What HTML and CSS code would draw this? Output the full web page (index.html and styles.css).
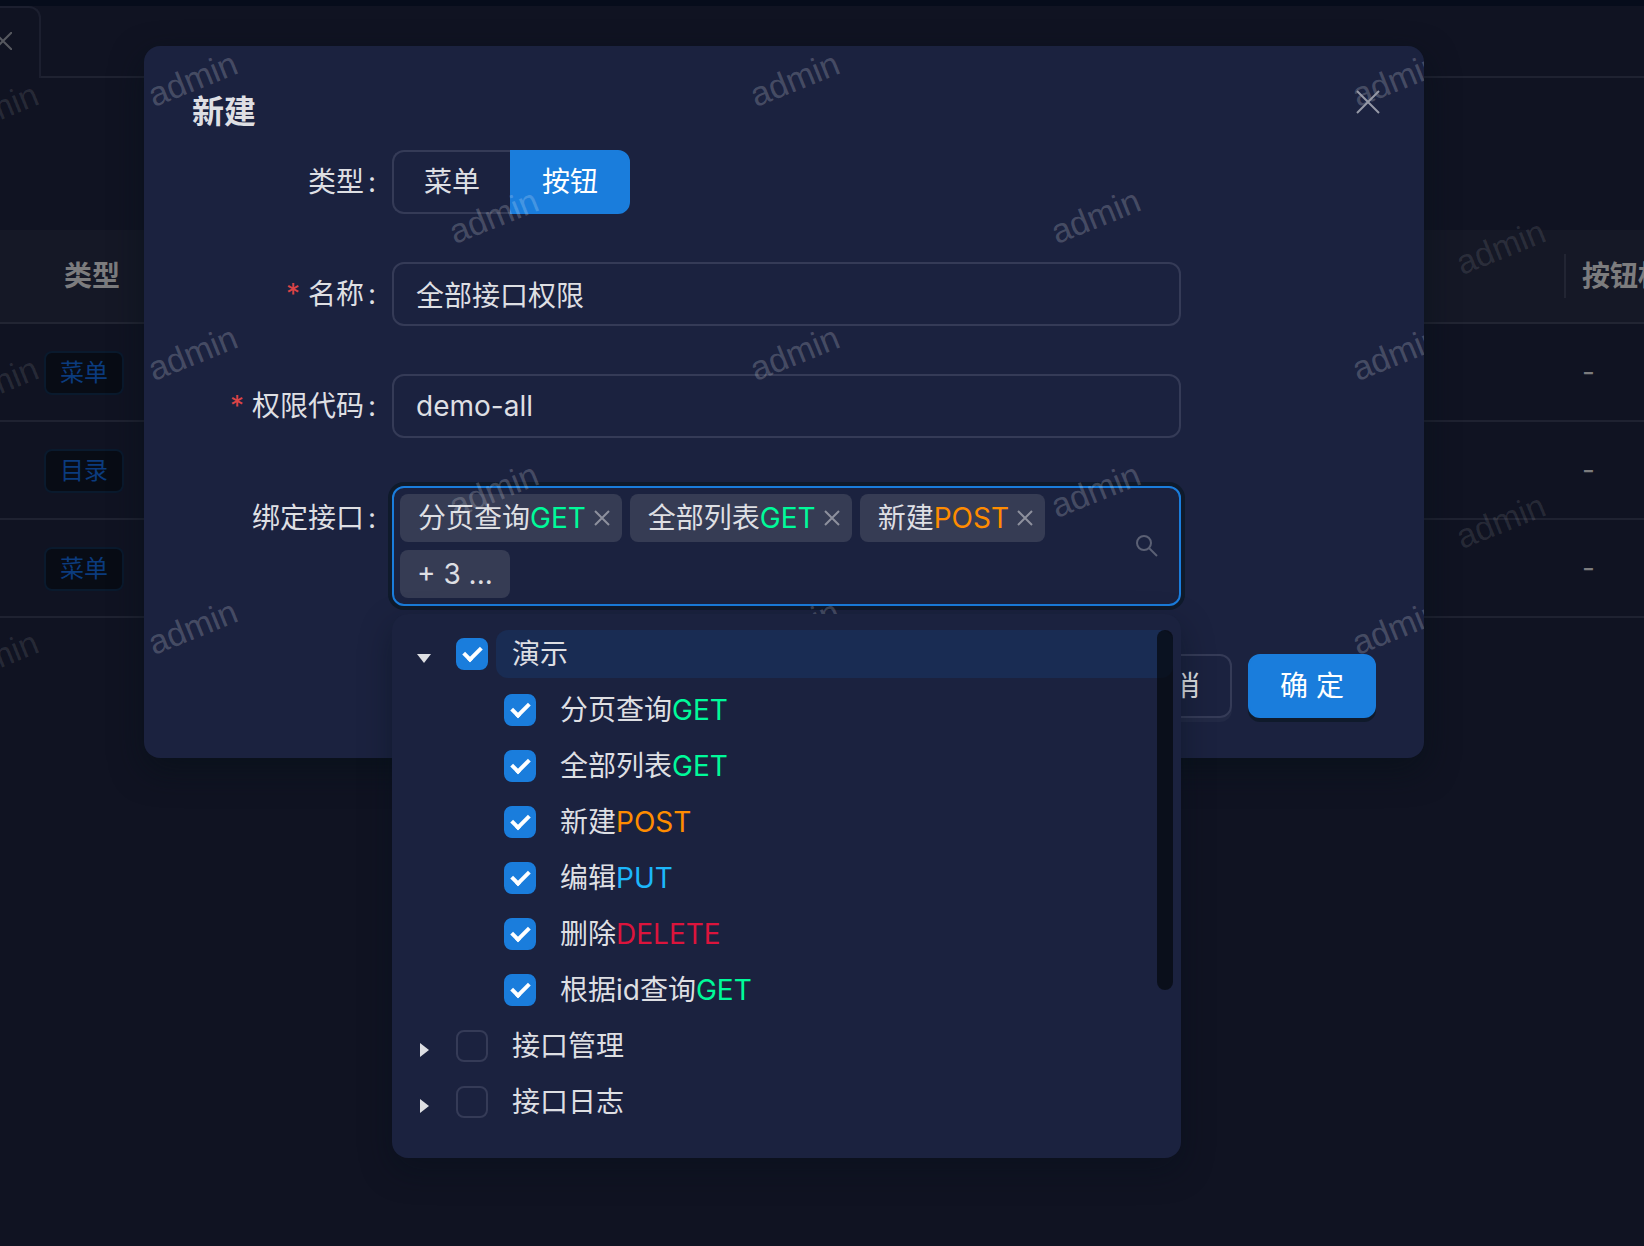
FILE: index.html
```html
<!DOCTYPE html>
<html lang="zh-Hans">
<head>
<meta charset="utf-8"/>
<meta content="width=device-width, initial-scale=1" name="viewport"/>
<title>菜单管理</title>
<link rel="stylesheet" href="styles.css">
</head>
<body>
<div class="page">
  <div class="tabs">
    <div class="tab">
      <button class="tab-close" type="button" aria-label="关闭标签">
        <svg viewBox="0 0 18 18"><path d="M0 0L18 18M18 0L0 18"/></svg>
      </button>
    </div>
    <div class="tabs-rest"></div>
  </div>
  <table class="menu-table">
    <thead>
      <tr><th class="col-type">类型</th><th></th><th class="col-perm">按钮权限</th></tr>
    </thead>
    <tbody>
      <tr><td class="col-type"><span class="type-tag">菜单</span></td><td></td><td class="col-perm">-</td></tr>
      <tr><td class="col-type"><span class="type-tag">目录</span></td><td></td><td class="col-perm">-</td></tr>
      <tr><td class="col-type"><span class="type-tag">菜单</span></td><td></td><td class="col-perm">-</td></tr>
    </tbody>
  </table>
  <svg class="watermark watermark-page" aria-hidden="true">
    <g text-anchor="middle">
      <text transform="translate(-2 115) rotate(-22)">admin</text>
      <text transform="translate(-2 389) rotate(-22)">admin</text>
      <text transform="translate(-2 663) rotate(-22)">admin</text>
      <text transform="translate(1505 252) rotate(-22)">admin</text>
      <text transform="translate(1505 526) rotate(-22)">admin</text>
    </g>
  </svg>
</div>

<div class="modal-wrap">
  <div class="modal" role="dialog" aria-labelledby="modalTitle">
    <button class="modal-close" type="button" aria-label="关闭">
      <svg viewBox="0 0 24 24"><path d="M1 1L23 23M23 1L1 23"/></svg>
    </button>
    <h2 class="modal-title" id="modalTitle">新建</h2>

    <form class="form" onsubmit="return false">
      <div class="form-item">
        <span class="form-label" id="typeLabel">类型<i class="colon">:</i></span>
        <div class="radio-group" role="radiogroup" aria-labelledby="typeLabel">
          <label class="radio-btn"><input name="type" type="radio" value="menu"/>菜单</label>
          <label class="radio-btn"><input name="type" type="radio" value="button" checked/>按钮</label>
        </div>
      </div>
      <div class="form-item">
        <label class="form-label" for="name"><b class="required">*</b>名称<i class="colon">:</i></label>
        <input class="text-input" id="name" type="text" value="全部接口权限"/>
      </div>
      <div class="form-item">
        <label class="form-label" for="code"><b class="required">*</b>权限代码<i class="colon">:</i></label>
        <input class="text-input" id="code" type="text" value="demo-all"/>
      </div>
      <div class="form-item">
        <label class="form-label" for="apiSearch">绑定接口<i class="colon">:</i></label>
        <div class="select-wrap">
          <div class="select">
            <div class="select-tags">
              <span class="tag">分页查询<em class="get">GET</em>
                <button class="tag-remove" type="button" aria-label="移除"><svg viewBox="0 0 16 16"><path d="M1 1L15 15M15 1L1 15"/></svg></button>
              </span>
              <span class="tag">全部列表<em class="get">GET</em>
                <button class="tag-remove" type="button" aria-label="移除"><svg viewBox="0 0 16 16"><path d="M1 1L15 15M15 1L1 15"/></svg></button>
              </span>
              <span class="tag">新建<em class="post">POST</em>
                <button class="tag-remove" type="button" aria-label="移除"><svg viewBox="0 0 16 16"><path d="M1 1L15 15M15 1L1 15"/></svg></button>
              </span>
              <span class="tag tag-more">+ 3 ...</span>
              <input class="select-search" id="apiSearch" type="text"/>
            </div>
            <svg class="search-icon" viewBox="0 0 22 22"><circle cx="8" cy="8" r="7"/><path d="M13 13L21 21"/></svg>
          </div>

          <div class="dropdown">
            <ul class="tree">
              <li class="tree-node active">
                <button class="switcher" type="button" aria-label="收起"><svg class="caret" viewBox="0 0 14 9"><path d="M0 0H14L7 9Z"/></svg></button>
                <input class="checkbox" id="n1" type="checkbox" checked/>
                <label class="node-title" for="n1">演示</label>
              </li>
              <li class="tree-node child">
                <input class="checkbox" id="n2" type="checkbox" checked/>
                <label class="node-title" for="n2">分页查询<em class="get">GET</em></label>
              </li>
              <li class="tree-node child">
                <input class="checkbox" id="n3" type="checkbox" checked/>
                <label class="node-title" for="n3">全部列表<em class="get">GET</em></label>
              </li>
              <li class="tree-node child">
                <input class="checkbox" id="n4" type="checkbox" checked/>
                <label class="node-title" for="n4">新建<em class="post">POST</em></label>
              </li>
              <li class="tree-node child">
                <input class="checkbox" id="n5" type="checkbox" checked/>
                <label class="node-title" for="n5">编辑<em class="put">PUT</em></label>
              </li>
              <li class="tree-node child">
                <input class="checkbox" id="n6" type="checkbox" checked/>
                <label class="node-title" for="n6">删除<em class="delete">DELETE</em></label>
              </li>
              <li class="tree-node child">
                <input class="checkbox" id="n7" type="checkbox" checked/>
                <label class="node-title" for="n7">根据id查询<em class="get">GET</em></label>
              </li>
              <li class="tree-node">
                <button class="switcher" type="button" aria-label="展开"><svg class="caret caret-right" viewBox="0 0 9 14"><path d="M0 0V14L9 7Z"/></svg></button>
                <input class="checkbox" id="n8" type="checkbox"/>
                <label class="node-title" for="n8">接口管理</label>
              </li>
              <li class="tree-node">
                <button class="switcher" type="button" aria-label="展开"><svg class="caret caret-right" viewBox="0 0 9 14"><path d="M0 0V14L9 7Z"/></svg></button>
                <input class="checkbox" id="n9" type="checkbox"/>
                <label class="node-title" for="n9">接口日志</label>
              </li>
            </ul>
            <div class="scroll-thumb"></div>
          </div>
        </div>
      </div>
    </form>

    <div class="modal-footer">
      <button class="btn" type="button">取 消</button>
      <button class="btn btn-primary" type="button">确 定</button>
    </div>

    <svg class="watermark" aria-hidden="true">
      <g text-anchor="middle">
        <text transform="translate(53 44) rotate(-22)">admin</text>
        <text transform="translate(655 44) rotate(-22)">admin</text>
        <text transform="translate(1257 44) rotate(-22)">admin</text>
        <text transform="translate(354 181) rotate(-22)">admin</text>
        <text transform="translate(956 181) rotate(-22)">admin</text>
        <text transform="translate(53 318) rotate(-22)">admin</text>
        <text transform="translate(655 318) rotate(-22)">admin</text>
        <text transform="translate(1257 318) rotate(-22)">admin</text>
        <text transform="translate(354 455) rotate(-22)">admin</text>
        <text transform="translate(956 455) rotate(-22)">admin</text>
        <text transform="translate(53 592) rotate(-22)">admin</text>
        <text transform="translate(655 592) rotate(-22)">admin</text>
        <text transform="translate(1257 592) rotate(-22)">admin</text>
      </g>
    </svg>
  </div>
</div>
</body>
</html>
```
FILE: styles.css
```css
* {
  box-sizing: border-box;
}
body {
  margin: 0;
  min-height: 100vh;
  background: #101322;
  color: #dedfe3;
  font-family: Inter, "Noto Sans CJK SC", sans-serif;
  font-size: 28px;
  line-height: 44px;
}
button, input {
  font: inherit;
  color: inherit;
  margin: 0;
}
button {
  cursor: pointer;
}
em, i, b {
  font-style: normal;
  font-weight: normal;
}
svg {
  display: block;
  fill: none;
  stroke: currentColor;
  stroke-width: 2;
}

/* page behind the dialog */
.page {
  position: relative;
  min-height: 100vh;
  overflow: hidden;
  border-top: 6px solid #060c1b;
}
.tabs {
  display: flex;
  height: 72px;
}
.tab {
  display: flex;
  align-items: center;
  width: 41px;
  padding-bottom: 4px;
  border-top: 2px solid #1c1f2f;
  border-right: 2px solid #1c1f2f;
  border-radius: 0 12px 0 0;
}
.tabs-rest {
  flex: 1;
  border-bottom: 2px solid #1f2231;
}
.tab-close {
  width: 18px;
  height: 18px;
  margin-left: -6px;
  padding: 0;
  border: none;
  background: none;
  color: #56585f;
}
.menu-table {
  width: 100%;
  margin-top: 152px;
  border-collapse: separate;
  border-spacing: 0;
  table-layout: fixed;
  color: #7c7c7e;
  white-space: nowrap;
}
.menu-table th {
  position: relative;
  height: 94px;
  padding: 0 16px;
  background: #151826;
  border-bottom: 2px solid #222533;
  font-weight: bold;
  text-align: left;
}
.menu-table td {
  height: 98px;
  padding: 0 16px;
  border-bottom: 2px solid #1f2231;
}
.menu-table .col-type {
  width: 200px;
  padding-left: 44px;
}
.menu-table th.col-type {
  padding-left: 64px;
}
.menu-table .col-perm {
  width: 78px;
}
th.col-perm::before {
  content: "";
  position: absolute;
  left: -2px;
  top: 24px;
  width: 2px;
  height: 44px;
  background: #222533;
}
.type-tag {
  display: inline-block;
  padding: 0 14px;
  border: 2px solid #0a1a2d;
  border-radius: 8px;
  background: #080c15;
  color: #0b3b7e;
  font-size: 24px;
  line-height: 40px;
  vertical-align: middle;
}

/* watermark */
.watermark {
  position: absolute;
  left: 0;
  top: 0;
  z-index: 9;
  width: 100%;
  height: 100%;
  border-radius: 16px;
  overflow: hidden;
  pointer-events: none;
}
.watermark text {
  fill: rgba(255, 255, 255, 0.2);
  stroke: none;
  font-family: "Liberation Sans", sans-serif;
  font-size: 34px;
}
.watermark-page text {
  fill: rgba(255, 255, 255, 0.1);
}

/* dialog */
.modal-wrap {
  position: absolute;
  top: 0;
  left: 0;
  right: 0;
  padding: 46px 220px 0 144px;
}
.modal {
  position: relative;
  padding: 40px 48px;
  border-radius: 16px;
  background: #1b223f;
  box-shadow: 0 12px 32px rgba(6, 16, 24, 0.6);
}
.modal-title {
  margin: 0 0 12px;
  font-size: 32px;
  line-height: 52px;
  font-weight: bold;
}
.modal-close {
  position: absolute;
  top: 34px;
  right: 34px;
  z-index: 10;
  width: 44px;
  height: 44px;
  padding: 10px;
  border: none;
  background: none;
  color: #9599a6;
}
.form {
  display: flex;
  flex-direction: column;
  gap: 48px;
  padding-right: 195px;
}
.form-item {
  display: grid;
  grid-template-columns: 200px minmax(0, 1fr);
}
.form-label {
  display: flex;
  justify-content: flex-end;
  align-items: center;
  height: 64px;
  white-space: nowrap;
}
.required {
  margin-right: 8px;
  color: #dc4446;
}
.colon {
  margin: 0 16px 0 4px;
}
.radio-group {
  display: flex;
}
.radio-btn {
  position: relative;
  padding: 8px 30px;
  border: 2px solid #353b57;
  cursor: pointer;
}
.radio-btn:first-child {
  border-right: none;
  border-radius: 12px 0 0 12px;
}
.radio-btn:last-child {
  border-radius: 0 12px 12px 0;
}
.radio-btn input {
  position: absolute;
  opacity: 0;
}
.radio-btn:has(input:checked) {
  background: #1a7ddc;
  border-color: #1a7ddc;
  color: #fff;
}
.text-input {
  width: 100%;
  height: 64px;
  padding: 0 22px;
  border: 2px solid #353b57;
  border-radius: 12px;
  background: none;
  outline: none;
}
.select-wrap {
  position: relative;
}
.select {
  display: flex;
  align-items: center;
  padding: 6px 21px 6px 6px;
  border: 2px solid #1a7ddc;
  border-radius: 12px;
  box-shadow: 0 0 0 4px #0f1a2b;
}
.select-tags {
  flex: 1;
  display: flex;
  flex-wrap: wrap;
  gap: 8px;
}
.tag {
  display: flex;
  align-items: center;
  height: 48px;
  padding: 0 10px 0 18px;
  border-radius: 8px;
  background: #363c54;
  white-space: nowrap;
}
.tag-more {
  padding: 0 17px;
}
.tag-remove {
  width: 16px;
  height: 16px;
  margin: 0 2px 0 8px;
  padding: 0;
  border: none;
  background: none;
  color: #8d909d;
}
.select-search {
  width: 8px;
  height: 48px;
  padding: 0;
  border: none;
  background: none;
  outline: none;
}
.search-icon {
  width: 22px;
  height: 22px;
  color: #5b6074;
}
.get {
  color: #00fa9a;
}
.post {
  color: #ff8c00;
}
.put {
  color: #1cb7fb;
}
.delete {
  color: #dc143c;
}

/* tree dropdown */
.dropdown {
  position: absolute;
  top: 100%;
  left: 0;
  right: 0;
  z-index: 20;
  margin-top: 8px;
  padding: 16px 8px;
  border-radius: 16px;
  background: #1b223f;
  box-shadow: 0 12px 32px rgba(6, 16, 24, 0.4);
}
.tree {
  display: flex;
  flex-direction: column;
  gap: 8px;
  height: 512px;
  margin: 0;
  padding: 0;
  list-style: none;
  overflow: hidden;
}
.tree-node {
  display: flex;
  align-items: center;
  flex-shrink: 0;
  height: 48px;
}
.tree-node.child {
  padding-left: 96px;
}
.switcher {
  display: flex;
  justify-content: center;
  align-items: center;
  width: 48px;
  height: 48px;
  padding: 8px 0 0;
  border: none;
  background: none;
}
.caret {
  width: 14px;
  height: 9px;
  fill: currentColor;
  stroke: none;
}
.caret-right {
  width: 9px;
  height: 14px;
}
.checkbox {
  display: flex;
  justify-content: center;
  appearance: none;
  flex-shrink: 0;
  width: 32px;
  height: 32px;
  margin: 0 8px;
  border: 2px solid #353b57;
  border-radius: 8px;
}
.checkbox:checked {
  border-color: #1a7ddc;
  background: #1a7ddc;
}
.checkbox:checked::after {
  content: "";
  box-sizing: border-box;
  width: 11px;
  height: 18px;
  margin-top: 3px;
  border: solid #fff;
  border-width: 0 4px 4px 0;
  transform: rotate(45deg);
}
.node-title {
  flex: 1;
  height: 48px;
  padding: 0 16px;
  border-radius: 12px;
  line-height: 48px;
}
.active .node-title {
  background: #192c53;
}
.scroll-thumb {
  position: absolute;
  top: 16px;
  right: 8px;
  width: 16px;
  height: 360px;
  border-radius: 8px;
  background: rgba(6, 10, 16, 0.75);
}

/* footer */
.modal-footer {
  display: flex;
  justify-content: flex-end;
  gap: 16px;
  margin-top: 48px;
}
.btn {
  height: 64px;
  padding: 0 30px;
  border: 2px solid #353b57;
  border-radius: 12px;
  background: none;
  box-shadow: 0 4px 0 #222945;
}
.btn-primary {
  border-color: #1a7ddc;
  background: #1a7ddc;
  color: #fff;
  box-shadow: 0 4px 0 #0f1a2b;
}
```
